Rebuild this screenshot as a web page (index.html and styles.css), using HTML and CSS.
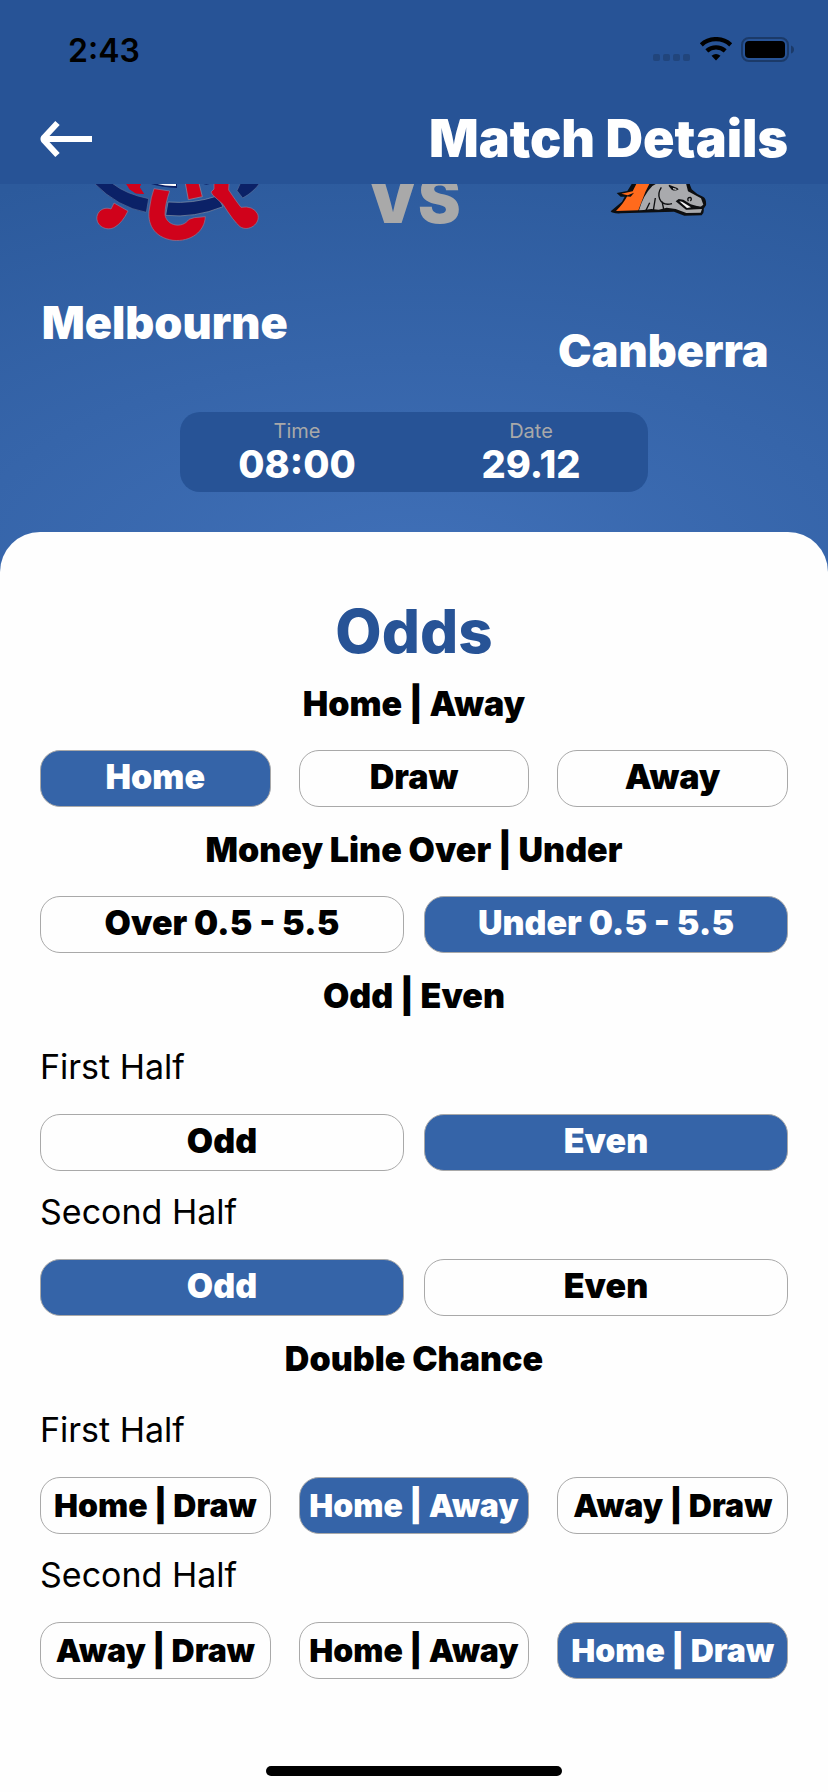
FILE: index.html
```html
<!DOCTYPE html>
<html lang="en">
<head>
<meta charset="utf-8">
<meta name="viewport" content="width=device-width, initial-scale=1">
<title>Match Details</title>
<link rel="stylesheet" href="styles.css">
</head>
<body>
<div class="screen">
  <header class="header">
    <div class="status">
      <span class="clock">2:43</span>
      <svg class="status-icons" width="142" height="26" viewBox="0 0 142 26" aria-hidden="true">
        <g fill="#21457c"><rect x="0" y="17" width="7" height="7" rx="2"/><rect x="10" y="17" width="7" height="7" rx="2"/><rect x="20" y="17" width="7" height="7" rx="2"/><rect x="30" y="17" width="7" height="7" rx="2"/></g>
        <g fill="none" stroke="#000" stroke-width="4.4"><path d="M48.300 7.800A22 22 0 0 1 77.700 7.800"/><path d="M53.800 13.800A14 14 0 0 1 72.200 13.800"/></g>
        <path d="M58.500 18.700Q63 15.300 67.500 18.700L63 23.500Z"/>
        <rect x="89" y="1" width="46" height="23" rx="7" fill="none" stroke="#1b3a69" stroke-width="2"/>
        <rect x="92" y="4" width="40" height="17" rx="4"/>
        <path d="M138 8.500Q141 9.500 141 12.500T138 16.500Z" fill="#1b3a69"/>
      </svg>
    </div>
    <nav class="nav">
      <button class="back" type="button" aria-label="Back">
        <svg width="52" height="38" viewBox="0 0 52 38" aria-hidden="true"><path d="M17.500 3L4 17.500Q3 19 4 20.500L17.500 35M4 19H52" fill="none" stroke="#fff" stroke-width="6"/></svg>
      </button>
      <h1 class="title">Match Details</h1>
    </nav>
  </header>

  <section class="hero">
    <div class="teams">
      <div class="team">
        <svg width="248" height="60" viewBox="-116 42 744 180" role="img" aria-label="Melbourne logo">
          <path d="M145 36L186 36L180 52L193 72L168 70L150 58L140 42Z" fill="#d0021b"/>
          <path d="M44 40H98Q138 72 207 86L200 127Q115 112 44 40Z" fill="#0b2167" stroke="#596e98" stroke-width="2"/>
          <path d="M145 36L186 36L180 52L193 72L168 70L150 58L140 42Z" fill="#d0021b"/>
          <path d="M482 40H540Q520 68 489 84L472 62Z" fill="#0b2167" stroke="#596e98" stroke-width="2"/>
          <path d="M214 40H292V54Q248 52 214 42Z" fill="#0b2167"/><path d="M234 42H289V48Q258 49 234 42Z" fill="#fff"/>
          <path d="M362 40H400L380 44Z" fill="#0b2167"/>
          <path d="M317 40H358L368 80L326 89Z" fill="#d0021b" stroke="#8896a8" stroke-width="2"/>
          <path d="M265 96Q340 102 413 78L430 110Q345 145 258 136Z" fill="#0b2167" stroke="#8896a8" stroke-width="2"/>
          <path d="M403 40H448L447 60Q469 93 484 112Q520 106 534 132C544 161 507 187 481 170Q461 153 430 103L399 75L394 66L403 57Z" fill="#d0021b" stroke="#8d7d98" stroke-width="2"/>
          <path d="M103 99L145 123Q128 158 106 171C82 186 47 168 52 139C57 116 80 111 94 117Z" fill="#d0021b" stroke="#8d7d98" stroke-width="2"/>
          <path d="M223 56L270 63Q256 103 256 134C261 168 308 177 328 148L344 143L377 140C375 185 333 216 280 211C220 202 202 158 209 117Q214 80 223 56Z" fill="#d0021b" stroke="#8d7d98" stroke-width="2"/>
        </svg>
        <h2 class="team-name">Melbourne</h2>
      </div>
      <div class="versus">VS</div>
      <div class="team team-away">
        <svg width="248" height="60" viewBox="-153 42 744 180" role="img" aria-label="Canberra logo">
          <path d="M130 34L112 63L80 69L92 80L104 80L96 95L62 124Q66 131 92 130L252 125L283 137L335 136Q343 130 341 116L348 106Q350 86 339 80L322 72L305 58L300 45L298 34Z" fill="#0d0e10"/>
          <path d="M141 38H180L166 66L145 121L78 123Q101 101 113 76L94 71L128 64Z" fill="#ff6a1c"/>
          <path d="M106 79L132 68L122 80Z" fill="#0d0e10"/>
          <path d="M187 48L208 36H287L294 64L333 85L340 104L331 111L302 103L280 89L266 87L257 94L288 119L336 117L332 128L289 129L257 117L230 113L206 119L184 117L161 120L147 121Q160 75 187 48Z" fill="#a9aaad"/>
          <path d="M214 52Q202 70 209 87Q218 108 246 101M216 94L221 117M196 84L190 121M179 98L168 121" fill="none" stroke="#0d0e10" stroke-width="4"/>
          <path d="M236 48L245 59Q256 65 266 58L262 54L237 44Z" fill="#0d0e10"/><path d="M249 56L259 58" stroke="#fff" stroke-width="3"/>
          <path d="M264 91L276 90L304 107L334 110L331 116L290 118Z" fill="#0d0e10"/>
          <path d="M268 94L276 95L303 112L291 114Z" fill="#f4f4f4"/>
          <path d="M295 94Q290 82 301 82Q307 87 301 93" fill="none" stroke="#0d0e10" stroke-width="4"/>
        </svg>
        <h2 class="team-name">Canberra</h2>
      </div>
    </div>
    <dl class="schedule">
      <div class="slot"><dt>Time</dt><dd>08:00</dd></div>
      <div class="slot"><dt>Date</dt><dd>29.12</dd></div>
    </dl>
  </section>

  <main class="sheet">
    <h2 class="odds-title">Odds</h2>

    <h3 class="market">Home | Away</h3>
    <div class="options three">
      <button class="option selected" type="button" aria-pressed="true">Home</button>
      <button class="option" type="button" aria-pressed="false">Draw</button>
      <button class="option" type="button" aria-pressed="false">Away</button>
    </div>

    <h3 class="market">Money Line Over | Under</h3>
    <div class="options two">
      <button class="option" type="button" aria-pressed="false">Over 0.5 - 5.5</button>
      <button class="option selected" type="button" aria-pressed="true">Under 0.5 - 5.5</button>
    </div>

    <h3 class="market">Odd | Even</h3>
    <h4 class="half">First Half</h4>
    <div class="options two">
      <button class="option" type="button" aria-pressed="false">Odd</button>
      <button class="option selected" type="button" aria-pressed="true">Even</button>
    </div>
    <h4 class="half">Second Half</h4>
    <div class="options two">
      <button class="option selected" type="button" aria-pressed="true">Odd</button>
      <button class="option" type="button" aria-pressed="false">Even</button>
    </div>

    <h3 class="market">Double Chance</h3>
    <h4 class="half">First Half</h4>
    <div class="options three compact">
      <button class="option" type="button" aria-pressed="false">Home | Draw</button>
      <button class="option selected" type="button" aria-pressed="true">Home | Away</button>
      <button class="option" type="button" aria-pressed="false">Away | Draw</button>
    </div>
    <h4 class="half">Second Half</h4>
    <div class="options three compact">
      <button class="option" type="button" aria-pressed="false">Away | Draw</button>
      <button class="option" type="button" aria-pressed="false">Home | Away</button>
      <button class="option selected" type="button" aria-pressed="true">Home | Draw</button>
    </div>
  </main>
  <div class="home-indicator"></div>
</div>
</body>
</html>
```

FILE: styles.css
```css
* {
  box-sizing: border-box;
}

body {
  margin: 0;
  background: #fefefe;
  color: #000;
  font-family: Inter, "Liberation Sans", sans-serif;
}

h1, h2, h3, h4, dl, dd {
  margin: 0;
}

button {
  padding: 0;
  border: 0;
  background: none;
  color: inherit;
  font: inherit;
}

.screen {
  display: flex;
  flex-direction: column;
  min-height: 100vh;
}

.header {
  position: sticky;
  top: 0;
  z-index: 1;
  background: #275396;
}

.status {
  display: flex;
  align-items: center;
  justify-content: space-between;
  height: 100px;
  padding: 0 33px 0 68px;
}

.clock {
  font-size: 32px;
  font-weight: 600;
}

.nav {
  display: flex;
  align-items: center;
  justify-content: space-between;
  height: 84px;
  padding: 0 40px 7px;
}

.back {
  display: flex;
}

.title {
  color: #fff;
  font-size: 52px;
  font-weight: 900;
  line-height: 60px;
}

.hero {
  padding: 0 40px 80px;
  background: radial-gradient(ellipse 110% 110% at 50% 100%, #4070b8, #2c5a9c);
  color: #fff;
}

.teams {
  display: grid;
  grid-template-columns: repeat(3, 1fr);
}

.team {
  display: flex;
  flex-direction: column;
  align-items: center;
  gap: 52px;
}

.team-away {
  gap: 80px;
}

.team-name {
  font-size: 45px;
  font-weight: 900;
  line-height: 54px;
}

.versus {
  display: flex;
  align-items: flex-end;
  justify-content: center;
  height: 60px;
  padding-bottom: 8px;
  color: #a9a9a9;
  font-size: 64px;
  font-weight: 900;
  line-height: 72px;
}

.schedule {
  display: grid;
  grid-template-columns: 1fr 1fr;
  width: 468px;
  max-width: 100%;
  margin: 34px auto 0;
  padding: 7px 0 6px;
  border-radius: 20px;
  background: #275396;
  text-align: center;
}

.slot dt {
  color: #a9a9a9;
  font-size: 20px;
  line-height: 24px;
}

.slot dd {
  font-size: 38px;
  font-weight: 800;
  line-height: 43px;
}

.sheet {
  margin-top: -40px;
  padding: 69px 40px 0;
  border-radius: 40px 40px 0 0;
  background: #fefefe;
}

.odds-title {
  margin-bottom: 23px;
  color: #275396;
  font-size: 60px;
  font-weight: 800;
  line-height: 60px;
  text-align: center;
}

.market {
  margin: 23px 0 26px;
  font-size: 34px;
  font-weight: 900;
  line-height: 40px;
  text-align: center;
}

.half {
  margin: 21px 0 27px;
  font-size: 34px;
  font-weight: 400;
  line-height: 40px;
}

.market + .half {
  margin-top: 31px;
}

.options {
  display: grid;
}

.two {
  grid-template-columns: repeat(2, 1fr);
  gap: 20px;
}

.three {
  grid-template-columns: repeat(3, 1fr);
  gap: 28px;
}

.option {
  height: 57px;
  padding-bottom: 4px;
  border: 1px solid #a9a9a9;
  border-radius: 20px;
  font-size: 34px;
  font-weight: 900;
  white-space: nowrap;
}

.compact .option {
  padding-bottom: 0;
  font-size: 32px;
}

.selected {
  background: #3564a8;
  color: #fff;
}

.home-indicator {
  width: 296px;
  height: 10px;
  margin: auto auto 16px;
  border-radius: 5px;
  background: #000;
}
```
